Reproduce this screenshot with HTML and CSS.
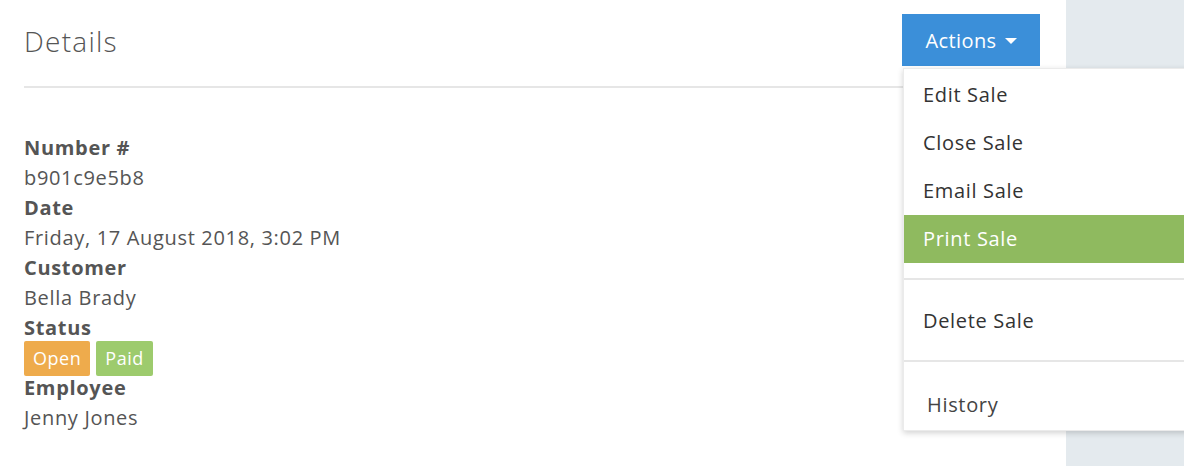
FILE: index.html
```html
<!DOCTYPE html>
<html lang="en">
<head>
  <meta charset="UTF-8">
  <meta name="viewport" content="width=device-width, initial-scale=1.0">
  <title>Sale Details</title>
  <link rel="stylesheet" href="styles.css">
</head>
<body>
  <div class="layout">
    <div class="panel">
      <div class="panel-header">
        <h1>Details</h1>
        <div class="actions">
          <button class="actions-btn">Actions <span class="caret"></span></button>
          <ul class="menu">
            <li>Edit Sale</li>
            <li>Close Sale</li>
            <li>Email Sale</li>
            <li class="active">Print Sale</li>
            <li class="divider"></li>
            <li>Delete Sale</li>
            <li class="divider"></li>
            <li class="history">History</li>
          </ul>
        </div>
      </div>
      <dl class="details">
        <dt>Number #</dt>
        <dd>b901c9e5b8</dd>
        <dt>Date</dt>
        <dd>Friday, 17 August 2018, 3:02 PM</dd>
        <dt>Customer</dt>
        <dd>Bella Brady</dd>
        <dt>Status</dt>
        <dd class="badges">
          <span class="badge open">Open</span>
          <span class="badge paid">Paid</span>
        </dd>
        <dt>Employee</dt>
        <dd>Jenny Jones</dd>
      </dl>
    </div>
    <div class="side"></div>
  </div>
</body>
</html>
```

FILE: styles.css
```css
* {
  margin: 0;
  padding: 0;
  box-sizing: border-box;
}
body {
  font-family: 'Open Sans', 'Noto Sans', Arial, sans-serif;
  letter-spacing: 0.042em;
  color: #555;
  background: #ffffff;
  overflow: hidden;
}
.layout {
  display: flex;
  min-height: 466px;
}
.panel {
  width: 1066px;
  padding: 0 26px 0 24px;
  background: #ffffff;
}
.side {
  flex: 1;
  background: #e4eaee;
}
.panel-header {
  display: flex;
  justify-content: space-between;
  align-items: center;
  padding: 14px 0 20px;
  border-bottom: 2px solid #e6e6e6;
}
h1 {
  font-size: 28px;
  font-weight: 300;
  letter-spacing: 0.045em;
  color: #555;
  margin-top: 1px;
}
.actions {
  position: relative;
}
.actions-btn {
  display: flex;
  align-items: center;
  justify-content: center;
  width: 138px;
  height: 52px;
  background: #3b8fd9;
  color: #ffffff;
  border: none;
  font-family: inherit;
  font-size: 20px;
  letter-spacing: 0.02em;
  cursor: pointer;
}
.caret {
  display: inline-block;
  width: 0;
  height: 0;
  margin-left: 8px;
  margin-top: 2px;
  border-left: 6px solid transparent;
  border-right: 6px solid transparent;
  border-top: 6px solid #ffffff;
}
.menu {
  position: absolute;
  top: 54px;
  left: 1px;
  width: 300px;
  list-style: none;
  background: #ffffff;
  border: 1px solid rgba(0, 0, 0, 0.08);
  box-shadow: 0 2px 6px rgba(0, 0, 0, 0.18);
  padding: 2px 0 1px;
  z-index: 10;
}
.menu li {
  height: 48px;
  line-height: 48px;
  padding-left: 19px;
  font-size: 20px;
  color: #333;
}
.menu li.active {
  background: #8fba5f;
  color: #ffffff;
}
.menu li.divider {
  height: 2px;
  background: #e6e6e6;
  margin: 15px 0 17px;
  padding: 0;
}
.menu li.history {
  padding-left: 23px;
  color: #444;
  margin-top: 19px;
}
.details {
  margin-top: 45px;
  font-size: 20px;
  line-height: 30px;
}
.details dt {
  font-weight: 700;
  color: #555;
}
.details dd {
  color: #555;
}
.badges {
  display: flex;
  gap: 6px;
  margin: -2px 0 -3px;
}
.badge {
  display: inline-block;
  height: 35px;
  line-height: 35px;
  padding: 0 9px;
  font-size: 18px;
  letter-spacing: 0.03em;
  color: #ffffff;
  border-radius: 2px;
}
.badge.open {
  background: #eeab4c;
}
.badge.paid {
  background: #9dcb6d;
}
```
